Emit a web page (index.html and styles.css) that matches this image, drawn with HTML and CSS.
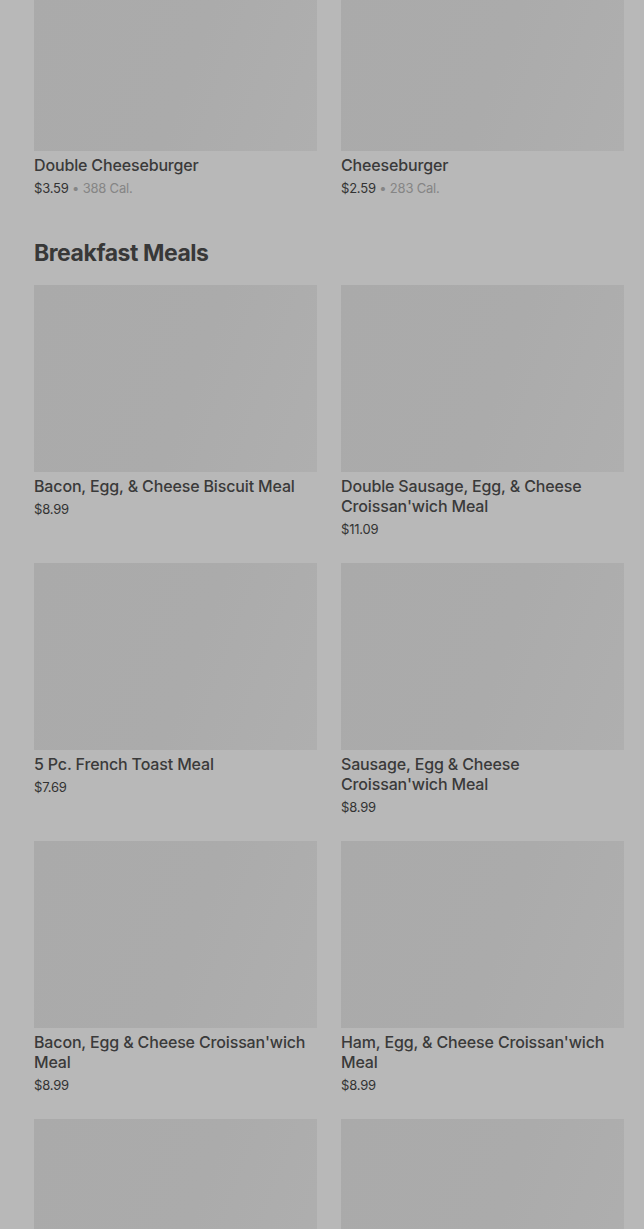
FILE: index.html
```html
<!DOCTYPE html>
<html lang="en">

<head>
  <meta charset="UTF-8" />
  <meta name="viewport" content="width=device-width, initial-scale=1.0" />
  <title>Menu</title>
  <link rel="stylesheet" href="styles.css">
</head>

<body>
  <div class="menu">
    <div class="grid first">
      <div class="item">
        <div class="thumb"></div>
        <div class="name">Double Cheeseburger</div>
        <div class="meta">$3.59 <span class="cal">• 388 Cal.</span></div>
      </div>
      <div class="item">
        <div class="thumb"></div>
        <div class="name">Cheeseburger</div>
        <div class="meta">$2.59 <span class="cal">• 283 Cal.</span></div>
      </div>
    </div>

    <h2 class="section-title">Breakfast Meals</h2>

    <div class="grid">
      <div class="item">
        <div class="thumb"></div>
        <div class="name">Bacon, Egg, &amp; Cheese Biscuit Meal</div>
        <div class="meta">$8.99</div>
      </div>
      <div class="item">
        <div class="thumb"></div>
        <div class="name">Double Sausage, Egg, &amp; Cheese Croissan'wich Meal</div>
        <div class="meta">$11.09</div>
      </div>
      <div class="item">
        <div class="thumb"></div>
        <div class="name">5 Pc. French Toast Meal</div>
        <div class="meta">$7.69</div>
      </div>
      <div class="item">
        <div class="thumb"></div>
        <div class="name">Sausage, Egg &amp; Cheese Croissan'wich Meal</div>
        <div class="meta">$8.99</div>
      </div>
      <div class="item">
        <div class="thumb"></div>
        <div class="name">Bacon, Egg &amp; Cheese Croissan'wich Meal</div>
        <div class="meta">$8.99</div>
      </div>
      <div class="item">
        <div class="thumb"></div>
        <div class="name">Ham, Egg, &amp; Cheese Croissan'wich Meal</div>
        <div class="meta">$8.99</div>
      </div>
      <div class="item">
        <div class="thumb"></div>
      </div>
      <div class="item">
        <div class="thumb"></div>
      </div>
    </div>
  </div>
</body>

</html>
```

FILE: styles.css
```css
html,
body {
  height: 100%;
  overflow: hidden;
}

body {
  font-family: Inter, "Noto Sans", sans-serif;
  background-color: #b8b8b8;
  color: #3a3a3a;
  margin: 0;
}

.menu {
  padding: 0 20px 0 34px;
  margin-top: -36px;
}

.grid {
  display: grid;
  grid-template-columns: 283px 283px;
  column-gap: 24px;
  row-gap: 24px;
}

.thumb {
  height: 187px;
  background: linear-gradient(110deg, #aaaaaa 0%, #ababab 55%, #afafaf 100%);
}

.name {
  margin-top: 4px;
  font-size: 16px;
  line-height: 20px;
  font-weight: 500;
  letter-spacing: -0.15px;
  color: #3a3a3a;
}

.meta {
  margin-top: 3px;
  font-size: 13px;
  line-height: 20px;
  letter-spacing: -0.2px;
  color: #333;
}

.cal {
  color: #858585;
}

.section-title {
  margin: 39px 0 16px;
  font-size: 23px;
  line-height: 32px;
  font-weight: 700;
  letter-spacing: -0.45px;
  color: #383838;
}
```
